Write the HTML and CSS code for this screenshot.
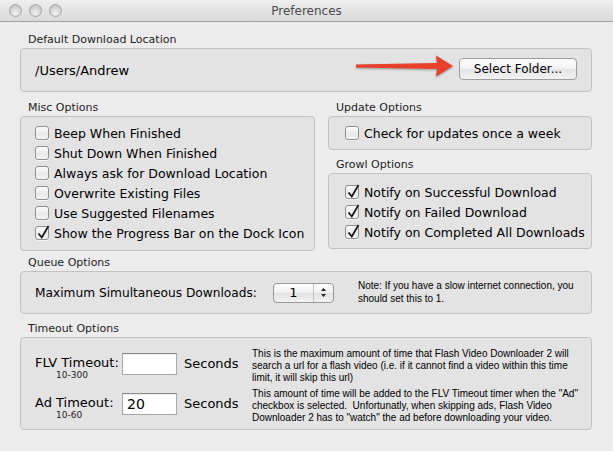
FILE: index.html
```html
<!DOCTYPE html>
<html lang="en">
<head>
    <meta charset="UTF-8">
    <title>Preferences</title>
    <link rel="stylesheet" href="styles.css">
</head>
<body>
    <div class="window">
        <div class="titlebar">
            <div class="lights">
                <span class="light"></span>
                <span class="light"></span>
                <span class="light"></span>
            </div>
            <div class="title">Preferences</div>
            <div></div>
        </div>

        <div class="content">
            <div class="group">
                <div class="group-label">Default Download Location</div>
                <div class="box location">
                    <span class="path">/Users/Andrew</span>
                    <svg class="arrow" width="100" height="24" viewBox="0 0 100 24">
                        <path d="M1 10.5 L82 9 L81 1.5 L98 12 L81 22.5 L82 15 L1 13.5 Z" fill="#e8402a"/>
                    </svg>
                    <button class="btn">Select Folder...</button>
                </div>
            </div>

            <div class="columns">
                <div class="group misc">
                    <div class="group-label">Misc Options</div>
                    <div class="box checks misc-box">
                        <div class="check-row"><span class="checkbox"></span>Beep When Finished</div>
                        <div class="check-row"><span class="checkbox"></span>Shut Down When Finished</div>
                        <div class="check-row"><span class="checkbox"></span>Always ask for Download Location</div>
                        <div class="check-row"><span class="checkbox"></span>Overwrite Existing Files</div>
                        <div class="check-row"><span class="checkbox"></span>Use Suggested Filenames</div>
                        <div class="check-row"><span class="checkbox checked"><svg viewBox="0 0 14 14"><path d="M2.5 7.5 L5.8 11.5 L12.5 0"/></svg></span>Show the Progress Bar on the Dock Icon</div>
                    </div>
                </div>

                <div class="side">
                    <div class="group">
                        <div class="group-label">Update Options</div>
                        <div class="box checks update-box">
                            <div class="check-row"><span class="checkbox"></span>Check for updates once a week</div>
                        </div>
                    </div>
                    <div class="group growl">
                        <div class="group-label">Growl Options</div>
                        <div class="box checks growl-box">
                            <div class="check-row"><span class="checkbox checked"><svg viewBox="0 0 14 14"><path d="M2.5 7.5 L5.8 11.5 L12.5 0"/></svg></span>Notify on Successful Download</div>
                            <div class="check-row"><span class="checkbox checked"><svg viewBox="0 0 14 14"><path d="M2.5 7.5 L5.8 11.5 L12.5 0"/></svg></span>Notify on Failed Download</div>
                            <div class="check-row"><span class="checkbox checked"><svg viewBox="0 0 14 14"><path d="M2.5 7.5 L5.8 11.5 L12.5 0"/></svg></span>Notify on Completed All Downloads</div>
                        </div>
                    </div>
                </div>
            </div>

            <div class="group queue">
                <div class="group-label">Queue Options</div>
                <div class="box queue-box">
                    <span class="big-label">Maximum Simultaneous Downloads:</span>
                    <div class="stepper">
                        <span class="stepper-value">1</span>
                        <span class="stepper-arrows">
                            <svg width="7" height="11" viewBox="0 0 7 11">
                                <path d="M3.5 1 L6 4 L1 4 Z M3.5 10 L6 7 L1 7 Z" fill="#222"/>
                            </svg>
                        </span>
                    </div>
                    <p class="note">Note: If you have a slow internet connection, you<br>should set this to 1.</p>
                </div>
            </div>

            <div class="group timeout">
                <div class="group-label">Timeout Options</div>
                <div class="box timeout-box">
                    <div class="timeout-row">
                        <div class="field">
                            <div class="field-name">
                                <span class="big-label">FLV Timeout:</span>
                                <span class="range">10-300</span>
                            </div>
                            <input class="num-input" type="text" value="">
                            <span class="big-label unit">Seconds</span>
                        </div>
                        <p class="desc">This is the maximum amount of time that Flash Video Downloader 2 will<br>search a url for a flash video (i.e. if it cannot find a video within this time<br>limit, it will skip this url)</p>
                    </div>
                    <div class="timeout-row">
                        <div class="field">
                            <div class="field-name">
                                <span class="big-label">Ad Timeout:</span>
                                <span class="range">10-60</span>
                            </div>
                            <input class="num-input" type="text" value="20">
                            <span class="big-label unit">Seconds</span>
                        </div>
                        <p class="desc">This amount of time will be added to the FLV Timeout timer when the "Ad"<br>checkbox is selected.&nbsp; Unfortunatly, when skipping ads, Flash Video<br>Downloader 2 has to "watch" the ad before downloading your video.</p>
                    </div>
                </div>
            </div>
        </div>
    </div>
</body>
</html>
```

FILE: styles.css
```css
* {
    box-sizing: border-box;
}
body {
    margin: 0;
    font-family: "DejaVu Sans", Verdana, sans-serif;
    background-color: #ececec;
    color: #000;
}
.window {
    width: 613px;
    height: 451px;
    background-color: #ececec;
}
.titlebar {
    height: 22px;
    display: grid;
    grid-template-columns: 1fr auto 1fr;
    align-items: center;
    background: linear-gradient(#efefef, #d9d9d9);
    border-bottom: 1px solid #a2a2a2;
}
.lights {
    display: flex;
    gap: 7px;
    padding-left: 9px;
}
.light {
    width: 13px;
    height: 13px;
    border-radius: 50%;
    border: 1px solid #a6a6a6;
    background: radial-gradient(circle at 50% 75%, #f4f4f4, #cacaca 70%);
}
.title {
    font-size: 12px;
    color: #4b4b4b;
}
.content {
    padding: 0 21px 0 20px;
}
.group-label {
    font-size: 11px;
    line-height: 14px;
    padding-left: 8px;
    margin-bottom: 1px;
    color: #1e1e1e;
    white-space: nowrap;
}
.group {
    margin-top: 11px;
}
.box {
    background-color: #e3e3e3;
    border: 1px solid #c3c3c3;
    border-radius: 4px;
}

/* download location */
.location {
    display: flex;
    align-items: center;
    height: 44px;
    padding: 0 14px;
}
.path {
    font-size: 13px;
}
.arrow {
    flex: none;
    margin-left: auto;
    margin-right: 4px;
    margin-top: -8px;
    filter: drop-shadow(0 1px 1px rgba(0, 0, 0, 0.35));
}
.btn {
    flex: none;
    width: 118px;
    height: 22px;
    margin-bottom: 2px;
    font-family: inherit;
    font-size: 12px;
    color: #000;
    border: 1px solid #9d9d9d;
    border-radius: 4px;
    background: linear-gradient(#ffffff, #f1f1f1 50%, #e4e4e4 51%, #f2f2f2);
    padding: 0;
}

/* checkbox groups */
.columns {
    display: flex;
    gap: 13px;
    margin-top: 9px;
    align-items: flex-start;
}
.columns .group {
    margin-top: 0;
}
.misc {
    width: 295px;
}
.side {
    flex: 1;
}
.side .growl {
    margin-top: 8px;
}
.checks {
    font-size: 12.5px;
}
.check-row {
    display: flex;
    align-items: center;
    gap: 5px;
    height: 20px;
    white-space: nowrap;
}
.misc-box {
    padding: 6px 0 7px 14px;
}
.update-box {
    padding: 6px 0 6px 16px;
}
.growl-box {
    padding: 8px 0 6px 16px;
}
.checkbox {
    position: relative;
    width: 14px;
    height: 14px;
    flex: none;
    border: 1px solid #8f8f8f;
    border-radius: 3px;
    background: linear-gradient(#fdfdfd, #e9e9e9 60%, #f6f6f6);
    box-shadow: 0 1px 0 rgba(255, 255, 255, 0.6);
}
.checkbox svg {
    position: absolute;
    left: 0;
    top: -1px;
    width: 14px;
    height: 14px;
    overflow: visible;
}
.checkbox svg path {
    fill: none;
    stroke: #1a1a1a;
    stroke-width: 1.8;
    stroke-linejoin: miter;
}

/* queue */
.queue {
    margin-top: 5px;
}
.queue-box {
    display: flex;
    align-items: center;
    height: 43px;
    padding: 0 14px;
}
.big-label {
    font-size: 13px;
    white-space: nowrap;
}
.queue-box .big-label {
    flex: none;
    font-size: 12.2px;
}
.stepper {
    flex: none;
    display: flex;
    width: 61px;
    height: 20px;
    margin-left: 16px;
    border: 1px solid #989898;
    border-radius: 4px;
    background: linear-gradient(#ffffff, #f0f0f0 50%, #e2e2e2 51%, #f3f3f3);
}
.stepper-value {
    width: 40px;
    text-align: center;
    font-size: 13px;
    line-height: 18px;
    border-right: 1px solid #c2c2c2;
}
.stepper-arrows {
    flex: 1;
    display: flex;
    align-items: center;
    justify-content: center;
}
.note {
    margin: 0 0 0 24px;
    font-family: "Liberation Sans", Arial, sans-serif;
    font-size: 10px;
    line-height: 12.5px;
    white-space: nowrap;
}

/* timeout */
.timeout {
    margin-top: 8px;
}
.timeout-box {
    padding: 10px 14px 5px 14px;
    display: flex;
    flex-direction: column;
    gap: 4px;
}
.timeout-row {
    display: flex;
    align-items: flex-start;
}
.field {
    width: 217px;
    flex: none;
    display: flex;
    align-items: flex-start;
    margin-top: 5px;
}
.field-name {
    width: 87px;
    flex: none;
    display: flex;
    flex-direction: column;
}
.field-name .big-label {
    line-height: 20px;
}
.range {
    font-size: 9px;
    line-height: 9px;
    margin-top: -2px;
    padding-left: 21px;
    color: #222;
}
.num-input {
    flex: none;
    width: 55px;
    height: 22px;
    border: 1px solid #a9a9a9;
    border-top-color: #8a8a8a;
    border-radius: 0;
    background: #fff;
    font-family: inherit;
    font-size: 14px;
    padding: 0 4px;
    box-shadow: inset 0 1px 1px rgba(0, 0, 0, 0.08);
}
.unit {
    line-height: 22px;
    margin-left: 7px;
}
.desc {
    margin: 0;
    font-family: "Liberation Sans", Arial, sans-serif;
    font-size: 10px;
    line-height: 12px;
    white-space: nowrap;
}
```
